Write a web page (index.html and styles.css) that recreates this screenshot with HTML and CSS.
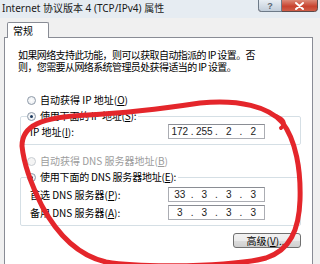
FILE: index.html
```html
<!DOCTYPE html>
<html>
<head>
<meta charset="utf-8">
<title>Internet 协议版本 4 (TCP/IPv4) 属性</title>
<link rel="stylesheet" href="styles.css">
</head>
<body>

<div class="window">
  <!-- title bar -->
  <div class="titlebar">
    <span class="title">Internet 协议版本 4 (TCP/IPv4) 属性</span>
    <svg class="caption" width="60" height="12" viewBox="0 0 60 12">
      <defs>
        <linearGradient id="gh" x1="0" y1="0" x2="0" y2="1">
          <stop offset="0" stop-color="#e8eef4"/>
          <stop offset="1" stop-color="#c0ccd9"/>
        </linearGradient>
        <linearGradient id="gc" x1="0" y1="0" x2="0" y2="1">
          <stop offset="0" stop-color="#dc8a78"/>
          <stop offset="0.55" stop-color="#c8432f"/>
          <stop offset="1" stop-color="#d0604a"/>
        </linearGradient>
      </defs>
      <path d="M0.5 0 V8.5 Q0.5 11.5 3.5 11.5 H56.5 Q59.5 11.5 59.5 8.5 V0" fill="url(#gc)" stroke="#5b4a4a"/>
      <path d="M0.5 0 V8.5 Q0.5 11.5 3.5 11.5 H23.5 V0" fill="url(#gh)" stroke="#6d7a88"/>
      <text x="12" y="9" text-anchor="middle" font-family="Liberation Sans, sans-serif" font-size="9" font-weight="bold" fill="#5a6673">?</text>
      <path d="M38 3 L45 9 M45 3 L38 9" stroke="#fff" stroke-width="2" stroke-linecap="round"/>
    </svg>
  </div>

  <!-- tabs -->
  <div class="tabs">
    <span class="tab">常规</span>
  </div>

  <div class="panel">
    <div class="desc">
      <div>如果网络支持此功能，则可以获取自动指派的 IP 设置。否</div>
      <div>则，您需要从网络系统管理员处获得适当的 IP 设置。</div>
    </div>

    <div class="opt first"><span class="radio"></span>自动获得 IP 地址(<u>O</u>)</div>

    <fieldset class="group ip">
      <legend class="opt"><span class="radio on"></span>使用下面的 IP 地址(<u>S</u>):</legend>
      <div class="row">
        <span class="label">IP 地址(<u>I</u>):</span>
        <div class="ipbox"><span>172</span><i>.</i><span>255</span><i>.</i><span>2</span><i>.</i><span>2</span></div>
      </div>
    </fieldset>

    <div class="opt dns-auto"><span class="radio off"></span>自动获得 DNS 服务器地址(<u>B</u>)</div>

    <fieldset class="group dns">
      <legend class="opt"><span class="radio on"></span>使用下面的 DNS 服务器地址(<u>E</u>):</legend>
      <div class="row">
        <span class="label">首选 DNS 服务器(<u>P</u>):</span>
        <div class="ipbox"><span>33</span><i>.</i><span>3</span><i>.</i><span>3</span><i>.</i><span>3</span></div>
      </div>
      <div class="row second">
        <span class="label">备用 DNS 服务器(<u>A</u>):</span>
        <div class="ipbox"><span>3</span><i>.</i><span>3</span><i>.</i><span>3</span><i>.</i><span>3</span></div>
      </div>
    </fieldset>

    <div class="actions">
      <span class="button">高级(<u>V</u>)...</span>
    </div>
  </div>
</div>

<!-- red marker loop drawn over the dialog -->
<svg class="marker" width="320" height="264" viewBox="0 0 320 264">
  <path d="M22 146 C22 126 40 117 88 115 C128 113 160 109 200 103 C240 99 268 107 282 122 C296 140 301 170 300 200 C299 230 290 250 266 258 C232 267 142 268 106 262 C76 255 56 232 42 206 C32 186 24 166 22 146"
        fill="none" stroke="#e4262b" stroke-width="5" stroke-linecap="round" stroke-linejoin="round"/>
  <path d="M276 116 C284 119 286 124 281 128" fill="none" stroke="#e4262b" stroke-width="4" stroke-linecap="round"/>
</svg>

</body>
</html>
```

FILE: styles.css
```css
html, body {
	margin: 0;
	padding: 0;
	overflow: hidden;
}

body {
	width: 320px;
	height: 264px;
	background: #f0f0f0;
	font-family: "Noto Sans CJK SC", "Noto Sans", sans-serif;
	font-size: 10px;
	color: #000;
}

.window {
	width: 320px;
	height: 264px;
	background: #f0f0f0;
}

/* title bar */
.titlebar {
	height: 18px;
	display: flex;
	justify-content: space-between;
	align-items: flex-start;
	padding-right: 2px;
	background: #e6ecf2;
}

.title {
	font-family: "Noto Sans", "Noto Sans CJK SC", sans-serif;
	font-size: 10px;
	line-height: 16px;
	padding-left: 2px;
	white-space: nowrap;
	color: #1a1a1a;
}

.caption {
	flex: none;
	display: block;
}

/* tabs */
.tabs {
	height: 19px;
	padding-left: 7px;
	display: flex;
	align-items: flex-end;
}

.tab {
	width: 42px;
	height: 16px;
	box-sizing: border-box;
	border: 1px solid #898c95;
	border-bottom: none;
	border-radius: 2px 2px 0 0;
	background: #fff;
	padding-left: 5px;
	line-height: 16px;
	margin-bottom: -1px;
	position: relative;
}

.panel {
	margin-left: 4px;
	width: 309px;
	height: 228px;
	box-sizing: border-box;
	border: 1px solid #898c95;
	border-bottom: none;
	background: #fff;
}

.desc {
	padding: 11px 0 0 13px;
	line-height: 12px;
	letter-spacing: -0.6px;
	white-space: nowrap;
}

.opt {
	display: flex;
	align-items: center;
	height: 12px;
	line-height: 12px;
	white-space: nowrap;
}

.opt.first {
	margin: 21px 0 0 22px;
}

.opt.dns-auto {
	margin: 10px 0 0 22px;
	color: #9c9c9c;
}

.radio {
	width: 9px;
	height: 9px;
	box-sizing: border-box;
	border: 1px solid #8e9aa8;
	border-radius: 50%;
	background: radial-gradient(#fff, #e4e8ec);
	margin-right: 4px;
	position: relative;
}

.radio.on::after {
	content: "";
	position: absolute;
	left: 2px;
	top: 2px;
	width: 3px;
	height: 3px;
	border-radius: 50%;
	background: #1d3a5e;
}

.radio.off {
	border-color: #c8cdd2;
	background: #f4f4f4;
}

u {
	text-decoration: underline;
}

/* group boxes */
.group {
	margin: 4px 0 0 15px;
	width: 281px;
	box-sizing: border-box;
	border: 1px solid #d5dfe5;
	border-radius: 2px;
	padding: 2px 0 5px 0;
}

.group legend {
	padding: 0 2px 0 0;
	margin-left: 6px;
	background: #fff;
	letter-spacing: -0.2px;
}

.group.dns {
	margin-top: 4px;
	padding-top: 4px;
	padding-bottom: 5px;
}

.row {
	display: flex;
	align-items: center;
	height: 15px;
	padding-left: 9px;
}

.row.second {
	margin-top: 3px;
}

.label {
	width: 138px;
	white-space: nowrap;
}

.ipbox {
	width: 97px;
	height: 15px;
	box-sizing: border-box;
	border: 1px solid #abadb3;
	border-top-color: #8a8d94;
	display: flex;
	align-items: center;
	font-family: "Liberation Sans", sans-serif;
	font-size: 10px;
	color: #222;
}

.ipbox span {
	width: 22px;
	text-align: center;
}

.ipbox i {
	font-style: normal;
	width: 3px;
	text-align: center;
}

.actions {
	display: flex;
	justify-content: flex-end;
	margin: 7px 11px 0 0;
}

.button {
	width: 68px;
	height: 15px;
	box-sizing: border-box;
	border: 1px solid #707070;
	border-radius: 3px;
	background: linear-gradient(#f2f2f2, #ebebeb 50%, #dddddd 51%, #cfcfcf);
	text-align: center;
	line-height: 13px;
}

.marker {
	position: absolute;
	top: 0;
	left: 0;
	pointer-events: none;
}
```
